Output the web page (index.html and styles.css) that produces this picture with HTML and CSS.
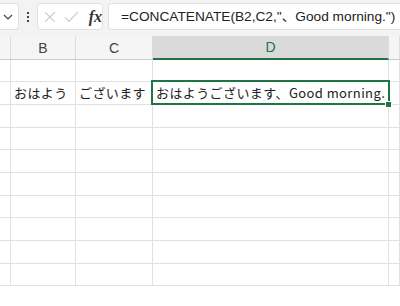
FILE: index.html
```html
<!DOCTYPE html>
<html>
<head>
    <title>Sheet</title>
    <link rel="stylesheet" href="styles.css">
</head>
<body>
    <div class="toolbar">
        <div class="namebox">
            <svg width="10" height="6" viewBox="0 0 10 6"><path d="M1 1 L5 5 L9 1" fill="none" stroke="#444" stroke-width="1.2"/></svg>
        </div>
        <div class="grip">
            <span></span><span></span><span></span>
        </div>
        <div class="fnbox">
            <svg width="12" height="12" viewBox="0 0 12 12"><path d="M1 1 L11 11 M11 1 L1 11" stroke="#c8c8c8" stroke-width="1.1" fill="none"/></svg>
            <svg width="15" height="12" viewBox="0 0 15 12"><path d="M1 6 L5 10.5 L14 1" stroke="#c8c8c8" stroke-width="1.1" fill="none"/></svg>
            <span class="fx">fx</span>
        </div>
        <div class="formula">=CONCATENATE(B2,C2,"、Good morning.")</div>
    </div>

    <div class="sheet">
        <div class="head"></div>
        <div class="head">B</div>
        <div class="head">C</div>
        <div class="head active">D</div>
        <div class="head"></div>

        <div class="cell"></div><div class="cell"></div><div class="cell"></div><div class="cell"></div><div class="cell"></div>

        <div class="cell"></div>
        <div class="cell">おはよう</div>
        <div class="cell">ございます</div>
        <div class="cell selected">おはようございます、Good morning.</div>
        <div class="cell"></div>

        <div class="cell"></div><div class="cell"></div><div class="cell"></div><div class="cell"></div><div class="cell"></div>
        <div class="cell"></div><div class="cell"></div><div class="cell"></div><div class="cell"></div><div class="cell"></div>
        <div class="cell"></div><div class="cell"></div><div class="cell"></div><div class="cell"></div><div class="cell"></div>
        <div class="cell"></div><div class="cell"></div><div class="cell"></div><div class="cell"></div><div class="cell"></div>
        <div class="cell"></div><div class="cell"></div><div class="cell"></div><div class="cell"></div><div class="cell"></div>
        <div class="cell"></div><div class="cell"></div><div class="cell"></div><div class="cell"></div><div class="cell"></div>
        <div class="cell"></div><div class="cell"></div><div class="cell"></div><div class="cell"></div><div class="cell"></div>
        <div class="cell"></div><div class="cell"></div><div class="cell"></div><div class="cell"></div><div class="cell"></div>
    </div>
</body>
</html>
```

FILE: styles.css
```css
body {
    margin: 0;
    height: 100vh;
    background-color: white;
    font-family: "Liberation Sans", "Noto Sans CJK JP", sans-serif;
    color: #222;
    overflow: hidden;
}

.toolbar {
    display: flex;
    align-items: center;
    height: 36px;
    padding-bottom: 3px;
    box-sizing: border-box;
    background-color: #f3f3f3;
}

.namebox {
    flex-shrink: 0;
    width: 19px;
    height: 27px;
    box-sizing: border-box;
    background-color: white;
    border: 1px solid #e0e0e0;
    border-left: none;
    border-radius: 0 4px 4px 0;
    display: flex;
    align-items: center;
    justify-content: center;
    padding-right: 2px;
}

.grip {
    flex-shrink: 0;
    width: 18px;
    display: flex;
    flex-direction: column;
    align-items: center;
    gap: 2px;
}

.grip span {
    width: 2px;
    height: 2px;
    background-color: #444;
}

.fnbox {
    flex-shrink: 0;
    width: 66px;
    height: 27px;
    box-sizing: border-box;
    background-color: white;
    border: 1px solid #e0e0e0;
    border-radius: 4px;
    display: flex;
    align-items: center;
    padding-left: 6px;
    gap: 8px;
}

.fx {
    font-family: "Liberation Serif", serif;
    font-style: italic;
    font-weight: bold;
    font-size: 16px;
    color: #333;
    margin-left: 2px;
}

.formula {
    margin-left: 5px;
    flex: 1;
    min-width: 0;
    height: 27px;
    box-sizing: border-box;
    background-color: white;
    border: 1px solid #e0e0e0;
    border-right: none;
    border-radius: 4px 0 0 4px;
    padding-left: 12px;
    font-size: 13.7px;
    line-height: 25px;
    white-space: nowrap;
    overflow: hidden;
    color: #222;
}

.sheet {
    display: grid;
    height: calc(100vh - 36px);
    overflow: hidden;
    grid-template-columns: 11px 65px 77px 236px 1fr;
    grid-template-rows: 24px repeat(3, 22px 23px 23px) 22px 23px;
    font-family: "Noto Sans CJK JP", sans-serif;
    font-size: 13px;
    letter-spacing: 0.4px;
}

.head {
    background-color: #f5f5f5;
    border-right: 1px solid #dcdcdc;
    border-bottom: 1px solid #c8c8c8;
    color: #444;
    font-family: "Liberation Sans", sans-serif;
    font-size: 14px;
    letter-spacing: 0;
    display: flex;
    align-items: center;
    justify-content: center;
}

.head.active {
    background-color: #dadada;
    color: #217346;
    border-bottom: 2px solid #217346;
}

.cell {
    border-right: 1px solid #e1e1e1;
    border-bottom: 1px solid #e1e1e1;
    padding-left: 3px;
    display: flex;
    align-items: flex-end;
    padding-bottom: 2px;
    white-space: nowrap;
    color: #222;
}

.selected {
    position: relative;
}

.selected::before {
    content: "";
    position: absolute;
    left: -2px;
    top: -2px;
    right: -2px;
    bottom: -1px;
    border: 2px solid #217346;
}

.selected::after {
    content: "";
    position: absolute;
    right: -4px;
    bottom: -4px;
    width: 5px;
    height: 5px;
    background-color: #217346;
    border: 1px solid white;
}
```
